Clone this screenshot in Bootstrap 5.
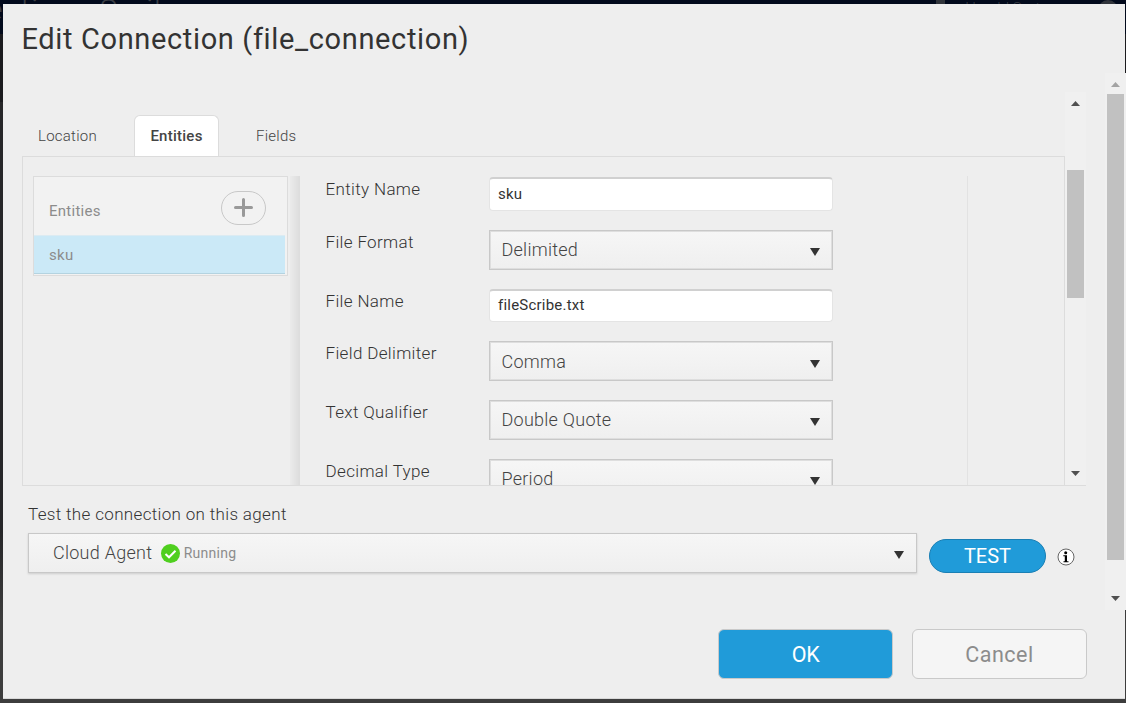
<!DOCTYPE html>
<html lang="en">
<head>
<meta charset="utf-8">
<meta name="viewport" content="width=device-width, initial-scale=1">
<title>Edit Connection</title>
<link href="https://cdn.jsdelivr.net/npm/bootstrap@5.3.0/dist/css/bootstrap.min.css" rel="stylesheet">
<style>
  html, body { height: 703px; overflow: hidden; }
  body { font-family: Roboto, "Liberation Sans", sans-serif; background: linear-gradient(#020a1c 0 34px, #1b1b1e 34px 102px, #262628 102px 530px, #3d3d3d 620px); color: #333; font-weight: 300; }
  .page-head { height: 34px; color: #3a3e45; white-space: nowrap; }
  .page-head .crumb { font-size: 30px; line-height: 34px; margin: -7px 0 0 -13px; letter-spacing: 1.2px; }
  .page-head .user { font-size: 15px; line-height: 16px; margin-right: 50px; }
  .page-head .avatar { width: 20px; height: 20px; background: #30343b; margin-right: 8px; }
  .page-head .brick { width: 9px; height: 10px; background: #30343b; margin-right: 20px; }
  .dlg { width: 1122px; height: 695px; margin: -30px 0 0 3px; background: #eee; border-bottom: 1px solid #d8d8d8; }
  .dlg-head { height: 69px; padding: 16px 0 0 18.5px; }
  .dlg-title { font-size: 29px; line-height: 38px; letter-spacing: .64px; font-weight: 400; color: #333; margin: 0; white-space: nowrap; }
  .dlg-main { height: 537px; margin-right: -1px; }
  .track { background: #f0f0f0; width: 21px; }
  .thumb { background: #c1c1c1; width: 17px; }
  .arrow { width: 9px; height: 5px; }
  .frame { margin: 19px 0 0 19px; width: 1064px; height: 394px; border-bottom: 1px solid #dcdcdc; }
  .tabs { height: 64px; }
  .tabs .tab { font-size: 15px; line-height: 41px; height: 41px; color: #444; letter-spacing: .25px; border: 1px solid transparent; border-bottom: 0; border-radius: 6px 6px 0 0; white-space: nowrap; }
  .tabs .tab.current { background: #fff; border-color: #dcdcdc; font-weight: 500; }
  .pane { border: 1px solid #dcdcdc; border-bottom: 0; height: 329px; padding: 19px 0 0 10px; }
  .ent-list { width: 255px; height: 100px; border: 1px solid #dcdcdc; background: #f2f2f2; font-size: 15px; font-weight: 400; color: #8c8c8c; letter-spacing: .27px; }
  .ent-head { height: 58px; padding: 0 21px 0 15px; }
  .ent-row { height: 39px; width: 251px; background: #cbe9f7; border-top: 1px solid #dcebf2; border-bottom: 1px solid #b4d3e0; padding-left: 15px; line-height: 38px; }
  .add { width: 45px; height: 34px; border: 1px solid #c8c8c8; border-radius: 17px; }
  .splitter { width: 10px; margin-left: 2px; background: linear-gradient(90deg, #ebebeb, #dcdcdc); }
  .fields { width: 668px; padding-left: 25.500px; border-right: 1px solid #e2e2e2; }
  .frow { height: 59px; }
  .frow .cap-lbl { width: 163.500px; font-size: 17px; line-height: 24px; letter-spacing: .35px; color: #333; white-space: nowrap; }
  .txt { width: 344px; height: 34px; margin-top: 1px; font-size: 15px; line-height: 30px; font-weight: 400; padding-left: 8px; color: #333; border: 1px solid #e4e4e4; border-top: 2px solid #d0d0d0; border-radius: 4px; background: #fff; letter-spacing: .22px; }
  .sel { width: 344px; height: 40px; font-size: 18px; line-height: 38px; padding: 0 12px 0 11.5px; color: #444; border: 1px solid #c8c8c8; box-shadow: inset 0 0 0 1px #dedede; background: linear-gradient(#f6f6f6, #efefef); letter-spacing: .26px; }
  .caret { width: 10px; height: 8px; margin-top: 4px; }
  .agent-lbl { font-size: 17px; line-height: 24px; letter-spacing: .34px; margin: 16px 0 0 25px; white-space: nowrap; }
  .agent-sel { width: 889px; height: 40px; margin-left: 25px; padding: 0 12px 0 24px; box-shadow: 0 1px 2px #ccc; line-height: 38px; }
  .test { width: 117px; height: 34px; border-radius: 17px; background: #209bd9; border: 1px solid #1a7fb4; color: #fff; font-size: 20px; line-height: 30px; font-weight: 400; padding: 0 0 1px; margin: 6px 0 0 12px; }
  .dlg-foot { padding: 19px 38px 0 0; gap: 19px; }
  .dlg-foot .btn { width: 175px; height: 50px; font-size: 21.5px; letter-spacing: .5px; line-height: 48px; padding: 1px 0 0; border: 1px solid #c9c9c9; border-radius: 6px; font-weight: 400; }
  .dlg-foot .ok { background: #209bd9; color: #fff; letter-spacing: -.3px; }
  .cancel { background: #f5f5f5; color: #8c8c8c; }
</style>
</head>
<body>
<div class="page-head d-flex justify-content-between overflow-hidden">
  <div class="crumb">ection : Scribe</div>
  <div class="d-flex"><span class="brick"></span><span class="user">Harold Sorte</span><span class="avatar rounded-circle"></span></div>
</div>
<div class="dlg d-flex flex-column position-relative">
  <div class="dlg-head"><h1 class="dlg-title">Edit Connection (file_connection)</h1></div>
  <div class="dlg-main d-flex justify-content-between">
    <div>
      <div class="frame d-flex">
        <div class="overflow-hidden" style="width:1043px">
          <div class="tabs d-flex align-items-end">
            <div class="tab" style="width:112px;padding-left:15px">Location</div>
            <div class="tab current text-center" style="width:85px">Entities</div>
            <div class="tab" style="padding-left:36px">Fields</div>
          </div>
          <div class="pane d-flex">
            <div class="ent-list">
              <div class="ent-head d-flex justify-content-between align-items-center">
                <span style="padding-top:10px">Entities</span>
                <span class="add d-flex align-items-center justify-content-center mt-1"><svg width="20" height="20" viewBox="0 0 20 20" fill="none" stroke="#999" stroke-width="3" stroke-linecap="round"><path d="M9.500 1.500v16M1.500 9.500h16"/></svg></span>
              </div>
              <div class="ent-row">sku</div>
            </div>
            <div class="splitter"></div>
            <div class="fields">
              <div class="frow d-flex" style="height:54px"><div class="cap-lbl" style="padding-top:1px">Entity Name</div><div class="txt">sku</div></div>
              <div class="frow d-flex"><div class="cap-lbl">File Format</div><div class="sel d-flex justify-content-between align-items-center"><span>Delimited</span><svg class="caret" viewBox="0 0 10 8"><path d="M0 0h10L5 8z" fill="#333"/></svg></div></div>
              <div class="frow d-flex" style="height:52px"><div class="cap-lbl">File Name</div><div class="txt" style="margin-top:0;height:33px;line-height:28px">fileScribe.txt</div></div>
              <div class="frow d-flex"><div class="cap-lbl">Field Delimiter</div><div class="sel d-flex justify-content-between align-items-center"><span style="padding-top:1px">Comma</span><svg class="caret" style="margin-top:6px" viewBox="0 0 10 8"><path d="M0 0h10L5 8z" fill="#333"/></svg></div></div>
              <div class="frow d-flex"><div class="cap-lbl">Text Qualifier</div><div class="sel d-flex justify-content-between align-items-center"><span>Double Quote</span><svg class="caret" viewBox="0 0 10 8"><path d="M0 0h10L5 8z" fill="#333"/></svg></div></div>
              <div class="frow d-flex"><div class="cap-lbl">Decimal Type</div><div class="sel d-flex justify-content-between align-items-center"><span>Period</span><svg class="caret" viewBox="0 0 10 8"><path d="M0 0h10L5 8z" fill="#333"/></svg></div></div>
            </div>
          </div>
        </div>
        <div class="track d-flex flex-column align-items-center">
          <svg class="arrow" style="margin-top:9px" viewBox="0 0 9 5"><path d="M4.500 0L9 5H0z" fill="#505050"/></svg>
          <div class="thumb" style="height:128px;margin-top:64px"></div>
          <svg class="arrow mt-auto" style="margin-bottom:9px" viewBox="0 0 9 5"><path d="M0 0h9L4.500 5z" fill="#505050"/></svg>
        </div>
      </div>
      <div class="agent-lbl">Test the connection on this agent</div>
      <div class="d-flex align-items-center" style="margin-top:7px">
        <div class="sel agent-sel d-flex align-items-center">
          <span>Cloud Agent</span>
          <svg width="19" height="19" viewBox="0 0 19 19" style="margin-left:8.500px"><circle cx="9.500" cy="9.500" r="9.500" fill="#4fcf1f"/><path d="M4.500 10l3.500 3.300 6.500-6.600" fill="none" stroke="#fff" stroke-width="2"/></svg>
          <span style="font-size:14px;font-weight:400;color:#8c8c8c;margin-left:4px">Running</span>
          <svg class="caret ms-auto" viewBox="0 0 10 8"><path d="M0 0h10L5 8z" fill="#333"/></svg>
        </div>
        <button class="btn test">TEST</button>
        <svg width="18" height="18" viewBox="0 0 18 18" style="margin:7px 0 0 10.500px"><circle cx="9" cy="9" r="8" fill="#fff" stroke="#666"/><circle cx="8.700" cy="4.700" r="1.500"/><path d="M6.300 7.300H10V13.300h1.500v1h-5v-1H7.800V8.300H6.300z"/></svg>
      </div>
    </div>
    <div class="track d-flex flex-column align-items-center">
      <svg class="arrow" style="margin-top:9px" viewBox="0 0 9 5"><path d="M4.500 0L9 5H0z" fill="#a3a3a3"/></svg>
      <div class="thumb" style="height:466px;margin-top:7px"></div>
      <svg class="arrow mt-auto" style="margin-bottom:9px" viewBox="0 0 9 5"><path d="M0 0h9L4.500 5z" fill="#505050"/></svg>
    </div>
  </div>
  <div class="dlg-foot d-flex justify-content-end"><button class="btn ok">OK</button><button class="btn cancel">Cancel</button></div>
</div>
<script src="https://cdn.jsdelivr.net/npm/bootstrap@5.3.0/dist/js/bootstrap.bundle.min.js"></script>
</body>
</html>
